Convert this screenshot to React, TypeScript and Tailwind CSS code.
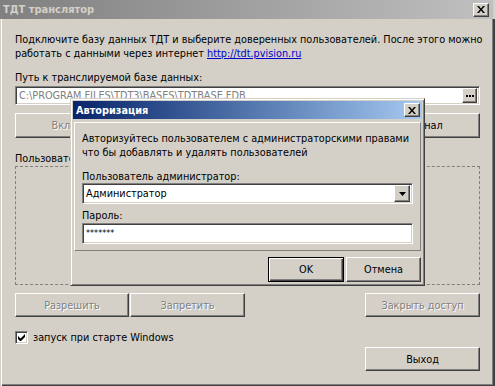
import React from 'react';

const font = "font-['DejaVu_Sans_Condensed','DejaVu_Sans',sans-serif] text-[10.8px] leading-[13px]";
const raised = 'border border-t-white border-l-white border-r-[#404040] border-b-[#404040] shadow-[inset_-1px_-1px_0_#808080]';
const sunken = 'border border-t-[#808080] border-l-[#808080] border-r-white border-b-white shadow-[inset_1px_1px_0_#404040,inset_-1px_-1px_0_#d4d0c8]';
const disabledText = 'text-[#808080] [text-shadow:1px_1px_0_#fff]';

function Btn({ children, className = '', disabled = false }: { children: React.ReactNode; className?: string; disabled?: boolean }) {
  return (
    <div className={`${raised} bg-[#d4d0c8] flex items-center justify-center whitespace-nowrap overflow-hidden ${disabled ? disabledText : 'text-black'} ${className}`}>
      {children}
    </div>
  );
}

function CloseBtn() {
  return (
    <div className={`${raised} bg-[#d4d0c8] w-[16px] h-[14px] flex items-center justify-center`}>
      <svg width="8" height="7" viewBox="0 0 8 7">
        <path d="M0 0h2l2 2.5L6 0h2L5 3.5 8 7H6L4 4.5 2 7H0l3-3.5z" fill="#000" />
      </svg>
    </div>
  );
}

export default function App() {
  return (
    <div className={`w-[495px] h-[386px] bg-[#d4d0c8] flex flex-col ${font} text-black overflow-hidden`}>
      {/* inactive title bar */}
      <div className="h-[19px] shrink-0 bg-gradient-to-r from-[#808080] to-[#c0c0c0] flex items-center justify-between pl-[3px] pr-[4px] mr-[2px]">
        <span className="font-bold text-[#d4d0c8] text-[11px]">ТДТ транслятор</span>
        <CloseBtn />
      </div>

      {/* window body */}
      <div className="relative flex-1 flex flex-col pl-[15px] pr-[15px] shadow-[inset_1px_0_0_#d4d0c8,inset_2px_0_0_#fff,inset_-2px_-1px_0_#404040,inset_-3px_-2px_0_#808080]">
        <p className="mt-[14px] leading-[14px] whitespace-nowrap">
          Подключите базу данных ТДТ и выберите доверенных пользователей. После этого можно
          <br />
          работать с данными через интернет{' '}
          <span className="text-[#0000cc] underline">http://tdt.pvision.ru</span>
        </p>

        <div className="mt-[10px] leading-[14px]">Путь к транслируемой базе данных:</div>
        <div className={`${sunken} mt-[1px] h-[19px] bg-white flex items-center pl-[3px] pr-[2px]`}>
          <span className={`flex-1 text-[#808080] whitespace-nowrap overflow-hidden`}>C:\PROGRAM FILES\TDT3\BASES\TDTBASE.FDB</span>
          <div className={`${raised} w-[15px] h-[15px] bg-[#d4d0c8] flex items-center justify-center`}>
            <svg width="8" height="2" viewBox="0 0 8 2">
              <rect x="0" y="0" width="2" height="2" fill="#000" />
              <rect x="3" y="0" width="2" height="2" fill="#000" />
              <rect x="6" y="0" width="2" height="2" fill="#000" />
            </svg>
          </div>
        </div>

        <div className="mt-[8px] flex gap-[2px]">
          <Btn disabled className="h-[25px] w-[231px]">Включить трансляцию данных</Btn>
          <Btn className="h-[25px] flex-1">Подключить удаленный канал</Btn>
        </div>

        <div className="mt-[14px] leading-[14px]">Пользователи</div>
        <div className="h-[119px] border border-dashed border-[#808080]" />

        <div className="mt-[8px] flex">
          <Btn disabled className="h-[24px] w-[114px]">Разрешить</Btn>
          <Btn disabled className="h-[24px] w-[115px] ml-[1px]">Запретить</Btn>
          <Btn disabled className="h-[24px] w-[115px] ml-auto">Закрыть доступ</Btn>
        </div>

        <div className="mt-[13px] flex items-center gap-[5px] h-[14px]">
          <div className={`${sunken} w-[13px] h-[13px] bg-white flex items-center justify-center`}>
            <svg width="7" height="7" viewBox="0 0 7 7">
              <path d="M0 2v3l2 2h1l4-4V0L2.5 4.5z" fill="#000" />
            </svg>
          </div>
          <span>запуск при старте Windows</span>
        </div>

        <div className="mt-[3px] flex justify-end">
          <Btn className="h-[24px] w-[115px]">Выход</Btn>
        </div>

        {/* modal dialog */}
        <div className="absolute left-[70px] top-[79px] w-[355px] h-[188px] bg-[#d4d0c8] border border-t-[#d4d0c8] border-l-[#d4d0c8] border-r-[#404040] border-b-[#404040] shadow-[inset_1px_1px_0_#fff,inset_-1px_-1px_0_#808080] p-[2px] flex flex-col">
          <div className="h-[18px] shrink-0 bg-gradient-to-r from-[#0a246a] to-[#a6caf0] flex items-center justify-between pl-[3px] pr-[2px]">
            <span className="font-bold text-white">Авторизация</span>
            <CloseBtn />
          </div>
          <div className="mx-[1px] mt-[3px] h-[129px] border border-t-white border-l-white border-r-[#808080] border-b-[#808080] pl-[7px] pr-[7px] flex flex-col">
            <p className="mt-[9px] leading-[14px] whitespace-nowrap">
              Авторизуйтесь пользователем с администраторскими правами
              <br />
              что бы добавлять и удалять пользователей
            </p>
            <div className="mt-[10px]">Пользователь администратор:</div>
            <div className={`${sunken} h-[21px] bg-white flex items-center pl-[3px] pr-[2px]`}>
              <span className="flex-1">Администратор</span>
              <div className={`${raised} w-[16px] h-[17px] bg-[#d4d0c8] flex items-center justify-center`}>
                <svg width="7" height="4" viewBox="0 0 7 4">
                  <path d="M0 0h7L3.5 4z" fill="#000" />
                </svg>
              </div>
            </div>
            <div className="mt-[5px]">Пароль:</div>
            <div className={`${sunken} mt-[1px] h-[21px] bg-white flex items-center pl-[3px] text-[9px]`}>*******</div>
          </div>
          <div className="mt-[6px] mr-[1px] flex justify-end gap-[2px]">
            <div className="h-[25px] w-[76px] border border-black bg-[#d4d0c8] shadow-[inset_1px_1px_0_#fff,inset_-1px_-1px_0_#404040,inset_-2px_-2px_0_#808080] flex items-center justify-center">OK</div>
            <Btn className="h-[25px] w-[75px]">Отмена</Btn>
          </div>
        </div>
      </div>
    </div>
  );
}
